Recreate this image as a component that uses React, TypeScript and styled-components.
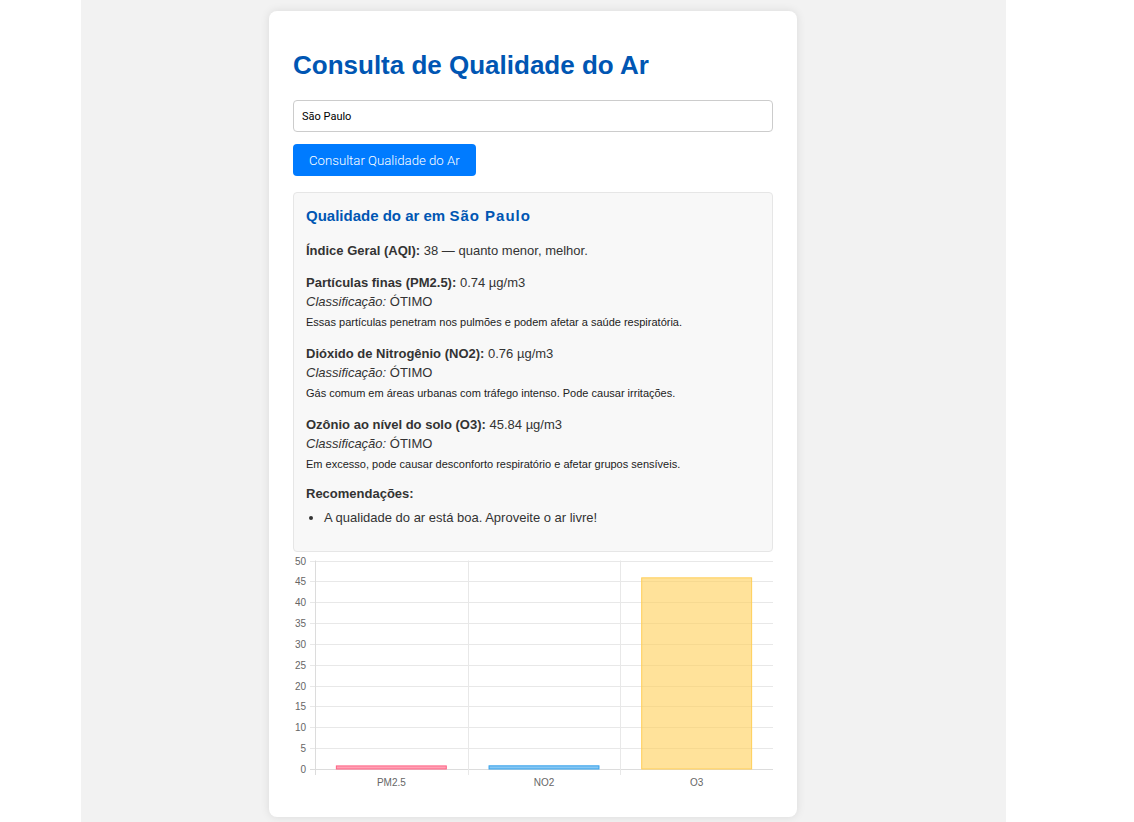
import styled, { createGlobalStyle } from "styled-components"

const GlobalStyle = createGlobalStyle`
  html, body {
    margin: 0;
    padding: 0;
    background: #ffffff;
    font-family: "Liberation Sans", Arial, sans-serif;
  }
`

type Pollutant = {
  label: string
  name: string
  value: number
  text: string
  fill: string
  stroke: string
}

const pollutants: Pollutant[] = [
  {
    label: "PM2.5",
    name: "Partículas finas (PM2.5):",
    value: 0.74,
    text: "Essas partículas penetram nos pulmões e podem afetar a saúde respiratória.",
    fill: "rgba(255, 99, 132, 0.6)",
    stroke: "rgba(255, 99, 132, 1)",
  },
  {
    label: "NO2",
    name: "Dióxido de Nitrogênio (NO2):",
    value: 0.76,
    text: "Gás comum em áreas urbanas com tráfego intenso. Pode causar irritações.",
    fill: "rgba(54, 162, 235, 0.6)",
    stroke: "rgba(54, 162, 235, 1)",
  },
  {
    label: "O3",
    name: "Ozônio ao nível do solo (O3):",
    value: 45.84,
    text: "Em excesso, pode causar desconforto respiratório e afetar grupos sensíveis.",
    fill: "rgba(255, 206, 86, 0.6)",
    stroke: "rgba(255, 206, 86, 1)",
  },
]

const Chart = () => {
  const left = 22
  const right = 480
  const top = 8.5
  const zero = 217
  const max = 50
  const scale = (zero - top) / max
  const slot = (right - left) / pollutants.length
  const ticks = [0, 5, 10, 15, 20, 25, 30, 35, 40, 45, 50]

  return (
    <ChartSvg width="480" height="241" viewBox="0 0 480 241">
      {ticks.map((t) => {
        const y = Math.round(zero - t * scale) + 0.5
        return (
          <g key={t}>
            <line x1={left - 5} x2={right} y1={y} y2={y} stroke={t === 0 ? "#dcdcdc" : "#e8e8e8"} />
            <AxisText x={left - 9} y={y + 3.5} textAnchor="end">
              {t}
            </AxisText>
          </g>
        )
      })}
      {[0, 1, 2].map((i) => {
        const x = Math.round(left + i * slot) + 0.5
        return <line key={i} x1={x} x2={x} y1={top} y2={zero + 6} stroke={i === 0 ? "#dcdcdc" : "#e8e8e8"} />
      })}
      {pollutants.map((p, i) => {
        const w = slot * 0.72
        const x = left + i * slot + (slot - w) / 2
        const h = p.value * scale
        return (
          <g key={p.label}>
            <rect x={x} y={zero - h} width={w} height={h} fill={p.fill} stroke={p.stroke} strokeWidth="1" />
            <AxisText x={left + i * slot + slot / 2} y={234} textAnchor="middle">
              {p.label}
            </AxisText>
          </g>
        )
      })}
    </ChartSvg>
  )
}

const App = () => {
  return (
    <Page>
      <GlobalStyle />
      <Card>
        <Title>Consulta de Qualidade do Ar</Title>
        <CityInput type="text" defaultValue="São Paulo" />
        <SearchButton>Consultar Qualidade do Ar</SearchButton>

        <Result>
          <ResultTitle>
            Qualidade do ar em <City>São Paulo</City>
          </ResultTitle>
          <Line>
            <b>Índice Geral (AQI):</b> 38 — quanto menor, melhor.
          </Line>

          {pollutants.map((p) => (
            <Block key={p.label}>
              <Line>
                <b>{p.name}</b> {p.value} µg/m3
              </Line>
              <Line>
                <i>Classificação:</i> ÓTIMO
              </Line>
              <Note>{p.text}</Note>
            </Block>
          ))}

          <SubTitle>Recomendações:</SubTitle>
          <List>
            <li>A qualidade do ar está boa. Aproveite o ar livre!</li>
          </List>
        </Result>

        <Chart />
      </Card>
    </Page>
  )
}

export default App

const Page = styled.div`
  width: 925px;
  margin-left: 81px;
  min-height: 822px;
  background: #f2f2f2;
  padding-top: 11px;
  box-sizing: border-box;
`

const Card = styled.div`
  width: 528px;
  margin-left: 188px;
  box-sizing: border-box;
  padding: 24px;
  background: #ffffff;
  border-radius: 8px;
  box-shadow: 0 0 10px rgba(0, 0, 0, 0.1);
  display: flex;
  flex-direction: column;
`

const Title = styled.h1`
  margin: 15px 0 19px;
  font-size: 26px;
  font-weight: bold;
  color: #0056b3;
`

const CityInput = styled.input`
  height: 32px;
  box-sizing: border-box;
  padding: 0 8px;
  border: 1px solid #cccccc;
  border-radius: 4px;
  font-family: Roboto, "Liberation Sans", sans-serif;
  font-size: 11px;
  color: #000;
  outline: none;
`

const SearchButton = styled.button`
  align-self: flex-start;
  margin-top: 12px;
  height: 32px;
  padding: 0 16px;
  border: none;
  border-radius: 4px;
  background: #007bff;
  color: #ffffff;
  font-family: Roboto, "Liberation Sans", sans-serif;
  font-weight: 300;
  font-size: 13.2px;
`

const Result = styled.div`
  margin-top: 16px;
  padding: 12px 12px 24px;
  background: #f8f8f8;
  border: 1px solid #e6e6e6;
  border-radius: 4px;
  color: #333333;
  font-size: 13px;
`

const ResultTitle = styled.h3`
  margin: 2px 0 17px;
  font-size: 15px;
  color: #0056b3;
`

const City = styled.span`
  letter-spacing: 1px;
`

const Line = styled.div`
  line-height: 19px;
`

const Block = styled.div`
  margin-top: 13px;

  & + & {
    margin-top: 12px;
  }
`

const Note = styled.div`
  margin-top: 2px;
  font-size: 11px;
  line-height: 19px;
  color: #222;
`

const SubTitle = styled.div`
  margin-top: 10px;
  font-weight: bold;
  line-height: 19px;
`

const List = styled.ul`
  margin: 5px 0 0;
  padding-left: 18px;
  line-height: 19px;
`

const ChartSvg = styled.svg`
  display: block;
`

const AxisText = styled.text`
  font-family: "Liberation Sans", Arial, sans-serif;
  font-size: 10px;
  fill: #666666;
`
